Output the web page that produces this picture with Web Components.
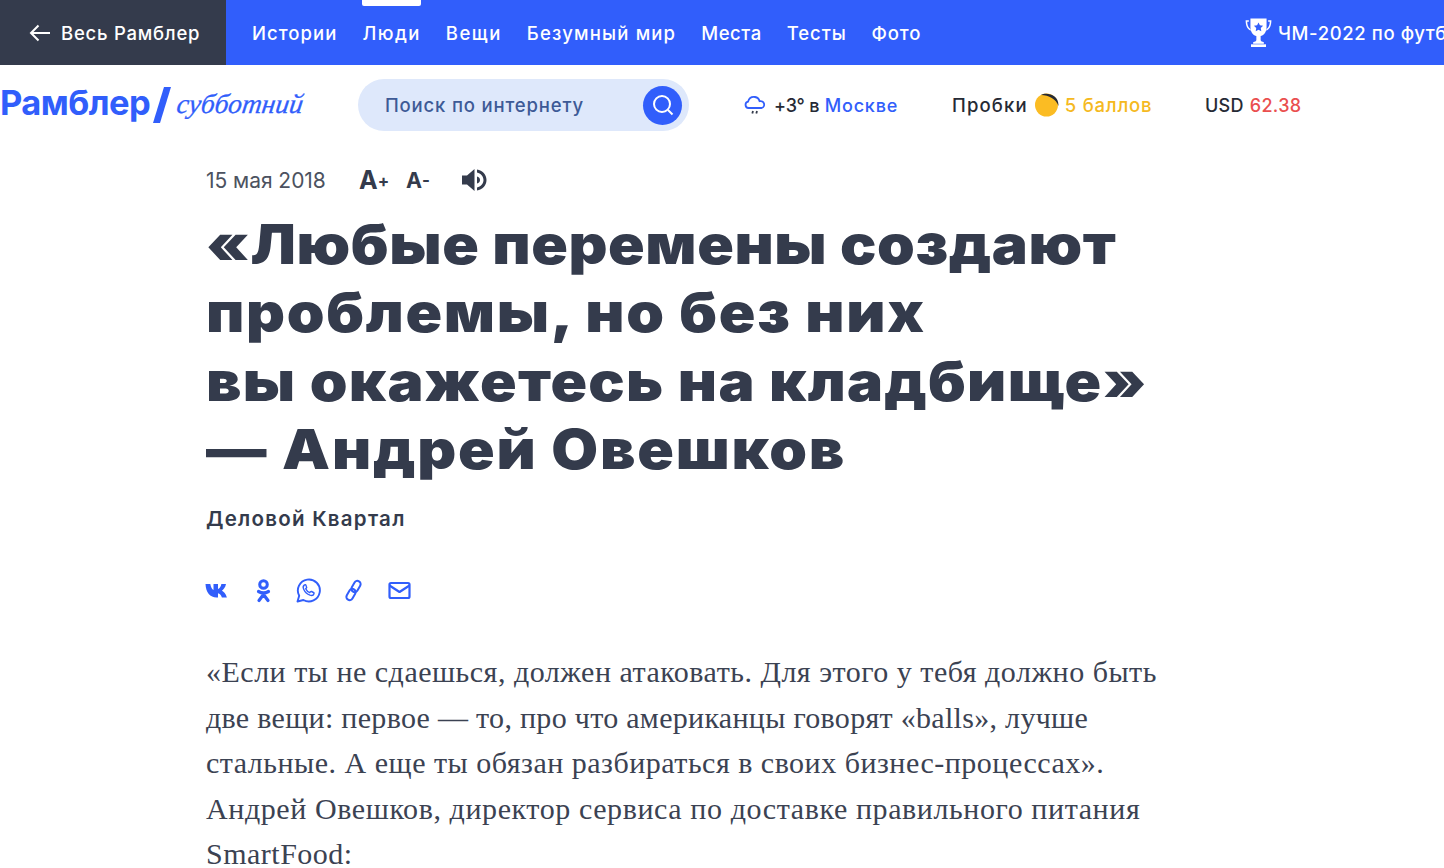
<!DOCTYPE html>
<html lang="ru">
<head>
<meta charset="utf-8">
<title>Рамблер</title>
<style>
  html, body { margin: 0; padding: 0; background: #fff; overflow: hidden; height: 868px; }
  body { font-family: Inter, "Noto Sans", sans-serif; color: #343b4c; }
  h1 span, p span { display: block; }
</style>
</head>
<body>
<top-bar></top-bar>
<site-header></site-header>
<article-view>
  <article-meta></article-meta>
  <h1 slot="title"><span style="letter-spacing:.53px">«Любые перемены создают</span><span style="letter-spacing:1.5px">проблемы, но без них</span><span style="letter-spacing:1.13px">вы окажетесь на кладбище»</span><span style="letter-spacing:1.6px">— Андрей Овешков</span></h1>
  <span slot="source">Деловой Квартал</span>
  <share-icons slot="share"></share-icons>
  <p slot="body"><span>«Если ты не сдаешься, должен атаковать. Для этого у тебя должно быть</span><span style="letter-spacing:.3px">две вещи: первое — то, про что американцы говорят «balls», лучше</span><span>стальные. А еще ты обязан разбираться в своих бизнес-процессах».</span><span style="letter-spacing:.59px">Андрей Овешков, директор сервиса по доставке правильного питания</span><span>SmartFood:</span></p>
</article-view>

<script>
class TopBar extends HTMLElement {
  constructor() {
    super();
    this.attachShadow({ mode: 'open' });
    this.shadowRoot.innerHTML = `
      <style>
        :host { display: flex; height: 65px; background: #315efb; color: #fff; overflow: hidden; font: 500 18.500px Inter, sans-serif; letter-spacing: 1.05px; }
        .back { width: 226px; flex: none; background: #343b4c; display: flex; align-items: center; gap: 10px; padding-left: 29px; box-sizing: border-box; letter-spacing: .76px; }
        nav { display: flex; align-items: center; gap: 25px; padding-left: 26px; flex: none; }
        a { position: relative; height: 65px; line-height: 66px; white-space: nowrap; }
        a.on::before { content: ""; position: absolute; left: 0; right: 0; top: 0; height: 6px; background: #fff; border-radius: 0 0 2px 2px; }
        .cup { margin-left: auto; width: 199px; flex: none; display: flex; align-items: center; gap: 6px; white-space: nowrap; overflow: hidden; letter-spacing: .6px; }
      </style>
      <div class="back">
        <svg width="22" height="18" viewBox="0 0 22 18" fill="none" stroke="#fff" stroke-width="2"><path d="M21 9H2M9.500 1.500 2 9l7.500 7.500"/></svg>
        <span>Весь Рамблер</span>
      </div>
      <nav>
        <a>Истории</a><a class="on" style="letter-spacing:1.45px">Люди</a><a style="letter-spacing:1.5px">Вещи</a><a style="letter-spacing:1.18px">Безумный мир</a><a style="letter-spacing:.55px">Места</a><a style="letter-spacing:.9px">Тесты</a><a style="letter-spacing:.85px">Фото</a>
      </nav>
      <div class="cup">
        <svg width="27" height="29" viewBox="1 .5 25 27" fill="#fff" style="flex:none">
          <path d="M1.500 2.500h3v1.500H3c0 3 1 5.500 3 6.800l.6 1.400C3.500 11.500 1.500 8 1.500 2.500zM25.500 2.500h-3v1.500H24c0 3-1 5.500-3 6.800l-.6 1.400c3.100-.7 5.100-4.200 5.100-9.700z"/>
          <path fill-rule="evenodd" d="M6 1h15v8c0 5-3 7.500-5.500 8.300V21c0 1 1.500 1.800 3 2v1.500h-10V23c1.500-.2 3-1 3-2v-3.700C9 16.500 6 14 6 9zM13.500 4.600l-1.300 2.700-3 .4 2.200 2.100-.5 3 2.600-1.400 2.600 1.400-.5-3 2.200-2.100-3-.4z"/>
          <path d="M6.500 25h14v2.500h-14z"/>
        </svg>
        <span>ЧМ-2022 по футболу</span>
      </div>`;
  }
}
customElements.define('top-bar', TopBar);

class SiteHeader extends HTMLElement {
  constructor() {
    super();
    this.attachShadow({ mode: 'open' });
    this.shadowRoot.innerHTML = `
      <style>
        :host { display: flex; align-items: center; height: 80px; font: 500 18px Inter, sans-serif; letter-spacing: .3px; color: #262a35; }
        .logo { width: 358px; flex: none; display: flex; align-items: center; color: #315efb; height: 52px; margin-top: -6px; }
        .logo b { font: 700 34.500px Inter, sans-serif; letter-spacing: -.55px; }
        .logo svg { margin: 5px 0 0 2px; flex: none; }
        .logo i { font: italic 400 27.500px "Liberation Serif", serif; margin: 4px 0 0 5px; letter-spacing: 0; transform: skewX(-8deg); -webkit-text-stroke: .3px #315efb; }
        .search { width: 331px; height: 52px; flex: none; box-sizing: border-box; border-radius: 26px; background: #dee8fb; color: #3d5a96; display: flex; align-items: center; justify-content: space-between; padding: 0 7px 0 27px; font-size: 18.500px; letter-spacing: .83px; }
        .go { width: 39px; height: 39px; border-radius: 50%; background: #315efb; display: flex; align-items: center; justify-content: center; }
        .info { display: flex; align-items: center; white-space: nowrap; }
        .weather { margin-left: 55px; gap: 8px; width: 155px; letter-spacing: -.2px; }
        .weather .blue { letter-spacing: .8px; margin-left: 1px; }
        .jam { margin-left: 53px; gap: 6px; width: 200px; font-size: 18.500px; }
        .jam .lbl { letter-spacing: 1.15px; }
        .jam .yellow { letter-spacing: .78px; }
        .usd { margin-left: 53px; gap: 6px; }
        .blue { color: #315efb; } .yellow { color: #f5b921; } .red { color: #ea4f4f; }
      </style>
      <div class="logo">
        <b>Рамблер</b>
        <svg width="20" height="36" viewBox="0 0 20 36"><path d="M12 0h7L8 36H1z" fill="#315efb"/></svg>
        <i>субботний</i>
      </div>
      <div class="search">
        <span>Поиск по интернету</span>
        <span class="go"><svg width="24" height="24" viewBox="0 0 24 24" fill="none" stroke="#fff" stroke-width="2"><circle cx="11" cy="11" r="8"/><path d="m17 17 4.500 4.500"/></svg></span>
      </div>
      <div class="info weather">
        <svg width="22" height="22" viewBox="0 0 22 22" fill="none" stroke="#315efb" stroke-width="1.800" style="flex:none"><path d="M5 14H4.500a3.200 3.200 0 0 1-.5-6.300C5 4.500 7.800 2.500 11 3c2.200.3 4 1.900 4.600 4.200a3.400 3.400 0 0 1 2 6.800H5z"/><path d="M9 17l-.7 2.500M13 17l-.7 2.500" stroke="#343b4c"/></svg>
        <span>+3° в <span class="blue">Москве</span></span>
      </div>
      <div class="info jam">
        <span class="lbl">Пробки</span>
        <svg width="25" height="24" viewBox="0 0 25 24" style="flex:none"><circle cx="12.500" cy="12" r="11.500" fill="#fbbc23"/><path d="M7 2C12-1 25 1 24.500 13 22 6 15 2 7 2z" fill="#262a35"/></svg>
        <span class="yellow">5 баллов</span>
      </div>
      <div class="info usd"><span>USD</span><span class="red">62.38</span></div>`;
  }
}
customElements.define('site-header', SiteHeader);

class ArticleMeta extends HTMLElement {
  constructor() {
    super();
    this.attachShadow({ mode: 'open' });
    this.shadowRoot.innerHTML = `
      <style>
        :host { display: flex; align-items: center; height: 30px; color: #343b4c; }
        .date { font: 400 21px Inter, sans-serif; letter-spacing: -.05px; width: 153px; flex: none; color: #4c5260; }
        .a { font: 700 25px Inter, sans-serif; }
        .a small { font-size: 17px; vertical-align: 2px; }
        .plus { width: 47px; flex: none; }
        .minus { width: 56px; flex: none; font-size: 21.500px; }
      </style>
      <span class="date">15 мая 2018</span>
      <span class="a plus">A<small>+</small></span>
      <span class="a minus">A<small>-</small></span>
      <svg width="26" height="24" viewBox="0 0 26 24" fill="#343b4c"><path d="M0 7.500h5L12.500 1v22L5 16.500H0z"/><path d="M15 1.500c5.500.8 9.500 5 9.500 10.500S20.500 21.700 15 22.500v-3c3.800-.8 6.500-3.800 6.500-7.500S18.800 5.300 15 4.500z"/><path d="M15 8.500c1.800.4 3 1.800 3 3.500s-1.200 3.100-3 3.500z"/></svg>`;
  }
}
customElements.define('article-meta', ArticleMeta);

class ShareIcons extends HTMLElement {
  constructor() {
    super();
    this.attachShadow({ mode: 'open' });
    this.shadowRoot.innerHTML = `
      <style>
        :host { display: flex; align-items: center; height: 26px; gap: 20.500px; }
        svg { flex: none; width: 25px; height: 25px; }
      </style>
      <svg viewBox="0 0 25 25" fill="#315efb" style="margin-left:-1px"><path d="M.500 6h4.800c.6 3.300 1.800 5.300 3.200 5.900V6h4.500v5.100c1.300-.3 2.800-2.200 3.400-5.100h4.600c-.6 3.500-2.800 5.700-4.100 6.700 1.400.7 3.900 2.700 5 6.800h-5c-.8-2.300-2.300-4-3.900-4.200v4.200h-1.400C5.200 19.500.8 14.500.500 6z"/></svg>
      <svg viewBox="0 0 25 25" fill="none" stroke="#315efb" stroke-width="3.200"><circle cx="12.500" cy="6.500" r="3.800" stroke-width="3"/><path d="M7.500 13.500c3.200 1.800 6.800 1.800 10 0M12.500 15v1.500L8 22.500M12.500 16.500l4.500 6" stroke-linecap="round"/></svg>
      <svg viewBox="0 0 25 25" fill="none" stroke="#315efb" stroke-width="1.900"><path d="M1.500 23.500l1.700-5.800A11 11 0 1 1 7.400 22z" stroke-linejoin="round"/><path d="M8.500 6.800c-1.300.8-1.700 2.500-.8 4.400 1.200 2.700 3.500 5 6.300 6 1.900.6 3.500 0 4-1.500.2-.6 0-1-.5-1.200l-2-1c-.5-.2-.8 0-1.100.4l-.6.8c-1.800-.7-3.300-2.100-4.100-3.900l.7-.7c.3-.4.400-.7.200-1.100l-.8-1.900c-.2-.5-.7-.7-1.300-.3z" stroke-width="1.400" stroke-linejoin="round"/></svg>
      <svg viewBox="0 0 25 25" fill="none" stroke="#315efb" stroke-width="2"><rect x="10.750" y="2.500" width="6.500" height="12" rx="3.250" transform="rotate(30 14 8.500)"/><rect x="5.750" y="10.500" width="6.500" height="12" rx="3.250" transform="rotate(30 9 16.500)"/></svg>
      <svg viewBox="0 0 25 25" fill="none" stroke="#315efb" stroke-width="2.200" stroke-linejoin="round"><rect x="2.500" y="5" width="20" height="15" rx="1.500"/><path d="M2.500 7.500l10 6.500 10-6.500"/></svg>`;
  }
}
customElements.define('share-icons', ShareIcons);

class ArticleView extends HTMLElement {
  constructor() {
    super();
    this.attachShadow({ mode: 'open' });
    this.shadowRoot.innerHTML = `
      <style>
        :host { display: block; padding: 20px 0 0 206px; }
        ::slotted(h1) { margin: 15px 0 0; width: 900px; font: 900 55px/68.300px Inter, sans-serif; color: #343b4c; white-space: nowrap; transform: scaleX(1.1); transform-origin: left top; }
        .source { margin-top: 21px; font: 600 20.500px/30px Inter, sans-serif; letter-spacing: 1.25px; color: #343b4c; }
        .share { margin-top: 43px; }
        ::slotted(p) { margin: 46px 0 0; font: 400 30px/45.500px "Liberation Serif", serif; letter-spacing: .5px; color: #3b4252; white-space: nowrap; }
      </style>
      <slot></slot>
      <slot name="title"></slot>
      <div class="source"><slot name="source"></slot></div>
      <div class="share"><slot name="share"></slot></div>
      <slot name="body"></slot>`;
  }
}
customElements.define('article-view', ArticleView);
</script>
</body>
</html>
